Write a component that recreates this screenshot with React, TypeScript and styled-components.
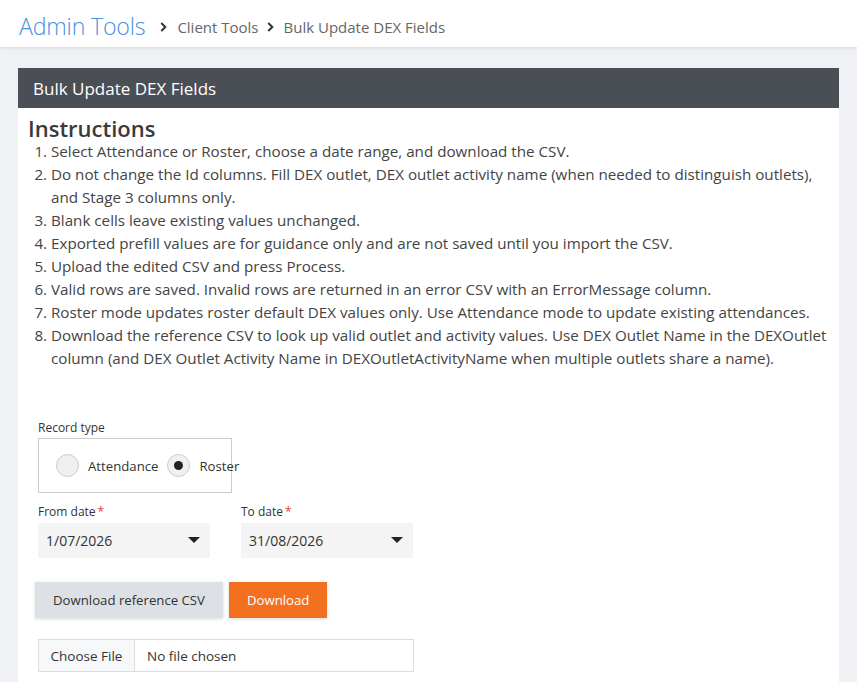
import styled, { createGlobalStyle } from 'styled-components';

const GlobalStyle = createGlobalStyle`
  body {
    margin: 0;
    background: #f0f1f5;
    font-family: 'Open Sans', 'Noto Sans', sans-serif;
    color: #3b3b3b;
  }
`;

const steps = [
  'Select Attendance or Roster, choose a date range, and download the CSV.',
  'Do not change the Id columns. Fill DEX outlet, DEX outlet activity name (when needed to distinguish outlets), and Stage 3 columns only.',
  'Blank cells leave existing values unchanged.',
  'Exported prefill values are for guidance only and are not saved until you import the CSV.',
  'Upload the edited CSV and press Process.',
  'Valid rows are saved. Invalid rows are returned in an error CSV with an ErrorMessage column.',
  'Roster mode updates roster default DEX values only. Use Attendance mode to update existing attendances.',
  'Download the reference CSV to look up valid outlet and activity values. Use DEX Outlet Name in the DEXOutlet column (and DEX Outlet Activity Name in DEXOutletActivityName when multiple outlets share a name).',
];

const Chevron = () => (
  <svg width="7" height="10" viewBox="0 0 7 10">
    <path d="M1.3 1 L5.3 5 L1.3 9" fill="none" stroke="#333" strokeWidth="2" />
  </svg>
);

const Caret = () => (
  <svg width="12" height="7" viewBox="0 0 12 7">
    <path d="M0 0 H12 L6 6 Z" fill="#222" />
  </svg>
);

const App = () => {
  return (
    <>
      <GlobalStyle />
      <TopBar>
        <AppTitle>Admin Tools</AppTitle>
        <Crumbs>
          <Chevron />
          <Crumb>Client Tools</Crumb>
          <Chevron />
          <Crumb>Bulk Update DEX Fields</Crumb>
        </Crumbs>
      </TopBar>
      <Page>
        <Panel>
          <PanelHeader>Bulk Update DEX Fields</PanelHeader>
          <PanelBody>
            <Heading>Instructions</Heading>
            <Steps>
              {steps.map((s) => (
                <li key={s}>{s}</li>
              ))}
            </Steps>

            <Form>
              <Field>
                <Label>Record type</Label>
                <RadioGroup>
                  <RadioOption>
                    <Radio />
                    Attendance
                  </RadioOption>
                  <RadioOption>
                    <Radio $checked />
                    Roster
                  </RadioOption>
                </RadioGroup>
              </Field>

              <DateRow>
                <Field>
                  <Label>
                    From date<Req>*</Req>
                  </Label>
                  <DateInput>
                    1/07/2026
                    <Caret />
                  </DateInput>
                </Field>
                <Field>
                  <Label>
                    To date<Req>*</Req>
                  </Label>
                  <DateInput>
                    31/08/2026
                    <Caret />
                  </DateInput>
                </Field>
              </DateRow>

              <Buttons>
                <Button>Download reference CSV</Button>
                <Button $primary>Download</Button>
              </Buttons>

              <FileInput>
                <FileButton>Choose File</FileButton>
                <FileName>No file chosen</FileName>
              </FileInput>
            </Form>
          </PanelBody>
        </Panel>
      </Page>
    </>
  );
};

const TopBar = styled.header`
  height: 47px;
  background: #fff;
  box-shadow: 0 1px 3px rgba(0, 0, 0, 0.12);
  display: flex;
  align-items: center;
  padding: 4px 19px 0;
  box-sizing: border-box;
  gap: 15px;
`;

const AppTitle = styled.h1`
  margin: 0;
  font-size: 23.2px;
  font-weight: 300;
  color: #4a90e2;
  letter-spacing: -0.2px;
`;

const Crumbs = styled.nav`
  display: flex;
  align-items: center;
  gap: 10px;
  font-size: 15px;
  color: #666;
  padding-top: 2px;
`;

const Crumb = styled.span`
  & + svg {
    margin-left: -2px;
  }
`;

const Page = styled.main`
  padding: 21px 18px 0;
`;

const Panel = styled.section`
  background: #fff;
  min-height: 620px;
`;

const PanelHeader = styled.div`
  height: 40px;
  background: #4a4e55;
  color: #fff;
  font-size: 17px;
  display: flex;
  align-items: center;
  padding: 0 15px;
`;

const PanelBody = styled.div`
  padding: 8px 10px 0;
`;

const Heading = styled.h2`
  margin: 0;
  font-size: 22px;
  font-weight: 600;
  color: #3a3a3a;
  line-height: 24px;
`;

const Steps = styled.ol`
  margin: 0;
  padding-left: 23px;
  font-size: 15.2px;
  line-height: 23px;
  color: #444;
`;

const Form = styled.div`
  margin-top: 50px;
  padding-left: 10px;
  display: flex;
  flex-direction: column;
  align-items: flex-start;
`;

const Field = styled.div`
  display: flex;
  flex-direction: column;
`;

const Label = styled.label`
  font-size: 12px;
  color: #333;
  line-height: 16px;
  margin-bottom: 2px;
`;

const Req = styled.span`
  color: #e53935;
  margin-left: 2px;
`;

const RadioGroup = styled.div`
  border: 1px solid #ccc;
  width: 194px;
  height: 55px;
  display: flex;
  align-items: center;
  padding-left: 17px;
  gap: 9px;
  box-sizing: border-box;
`;

const RadioOption = styled.label`
  display: flex;
  align-items: center;
  gap: 9px;
  font-size: 13.2px;
  color: #333;
`;

const Radio = styled.span<{ $checked?: boolean }>`
  width: 23px;
  height: 23px;
  border-radius: 50%;
  border: 1px solid #ccc;
  background: #f0f0f0;
  box-sizing: border-box;
  display: flex;
  align-items: center;
  justify-content: center;
  &::after {
    content: '';
    width: 9px;
    height: 9px;
    border-radius: 50%;
    background: ${(p) => (p.$checked ? '#222' : 'transparent')};
  }
`;

const DateRow = styled.div`
  display: flex;
  gap: 31px;
  margin-top: 11px;
`;

const DateInput = styled.div`
  width: 172px;
  height: 35px;
  margin-top: 1px;
  background: #f4f4f4;
  box-sizing: border-box;
  display: flex;
  align-items: center;
  justify-content: space-between;
  padding: 0 10px 0 8px;
  font-size: 14px;
  color: #333;
`;

const Buttons = styled.div`
  display: flex;
  gap: 6px;
  margin-top: 24px;
  margin-left: -3px;
`;

const Button = styled.button<{ $primary?: boolean }>`
  height: 36px;
  border: none;
  padding: 0 18px;
  font-family: inherit;
  font-size: 13.2px;
  color: ${(p) => (p.$primary ? '#fff' : '#333')};
  background: ${(p) => (p.$primary ? '#f37021' : '#dde1e5')};
  box-shadow: 0 1px 3px rgba(0, 0, 0, 0.15);
`;

const FileInput = styled.div`
  display: flex;
  width: 376px;
  height: 33px;
  border: 1px solid #ddd;
  box-sizing: border-box;
  margin-top: 21px;
  font-size: 13.5px;
  color: #333;
`;

const FileButton = styled.div`
  width: 96px;
  box-sizing: border-box;
  background: #f7f8fa;
  border-right: 1px solid #ddd;
  display: flex;
  align-items: center;
  justify-content: center;
`;

const FileName = styled.div`
  display: flex;
  align-items: center;
  padding: 0 12px;
`;

export default App;
